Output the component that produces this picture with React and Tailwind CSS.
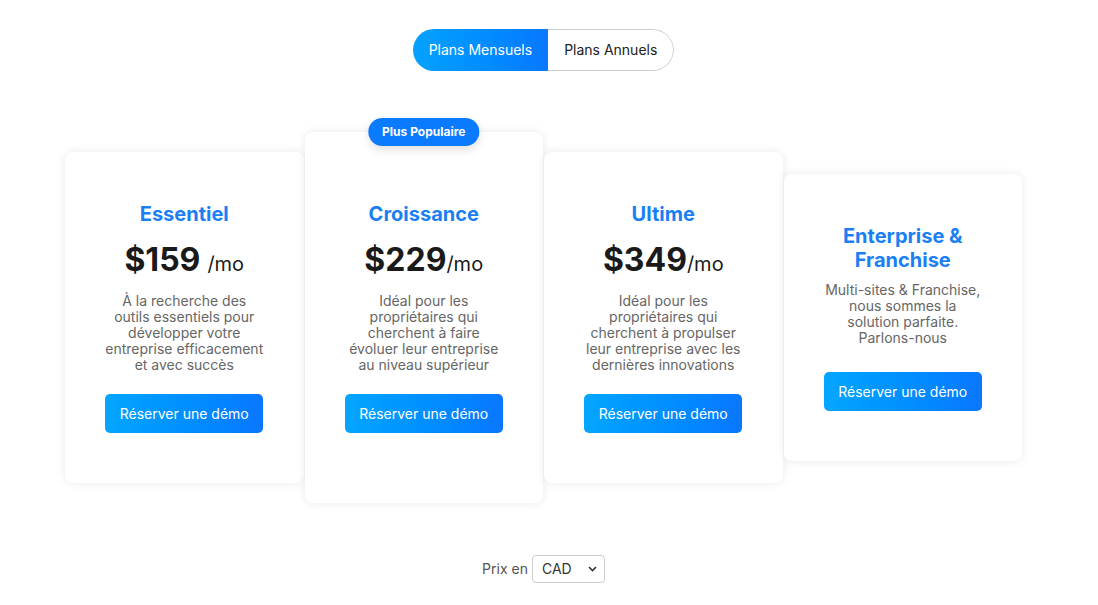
import { useState } from 'react';

const plans = [
  {
    name: 'Essentiel',
    price: '$159',
    spaced: true,
    desc: 'À la recherche des outils essentiels pour développer votre entreprise efficacement et avec succès',
  },
  {
    name: 'Croissance',
    price: '$229',
    popular: true,
    desc: 'Idéal pour les propriétaires qui cherchent à faire évoluer leur entreprise au niveau supérieur',
  },
  {
    name: 'Ultime',
    price: '$349',
    desc: 'Idéal pour les propriétaires qui cherchent à propulser leur entreprise avec les dernières innovations',
  },
  {
    name: 'Enterprise & Franchise',
    desc: 'Multi-sites & Franchise, nous sommes la solution parfaite. Parlons-nous',
  },
];

const DemoButton = ({ className }) => (
  <button
    type="button"
    className={`h-[39px] w-[158px] rounded-[5px] bg-gradient-to-r from-[#05a6ff] to-[#0a77ff] text-sm text-white ${className}`}
  >
    Réserver une démo
  </button>
);

const PlanCard = ({ plan }) => (
  <div
    className={`relative flex flex-col items-center rounded-lg bg-white text-center shadow-[0_0_10px_rgba(0,0,0,0.09)] ${
      plan.popular ? 'py-[70px]' : 'py-[50px]'
    }`}
  >
    {plan.popular && (
      <span className="absolute -top-[14px] left-1/2 flex h-[28px] -translate-x-1/2 items-center rounded-full bg-[#0a7bff] px-[14px] text-xs font-bold text-white shadow-[0_4px_10px_rgba(0,0,0,0.12)]">
        Plus Populaire
      </span>
    )}
    <h3 className="max-w-[170px] text-xl leading-6 font-bold text-[#1a7ff5]">{plan.name}</h3>
    {plan.price && (
      <p className="mt-[14px] flex h-[40px] items-baseline text-[#1a1a1a]">
        <span className="text-[32px] leading-[40px] font-bold">{plan.price}</span>
        <span className={`text-xl ${plan.spaced ? 'ml-[7px]' : ''}`}>/mo</span>
      </p>
    )}
    <p
      className={`w-[160px] text-sm leading-4 text-[#666] ${plan.price ? 'mt-[13px]' : 'mt-[10px]'}`}
    >
      {plan.desc}
    </p>
    <DemoButton className={plan.price ? 'mt-[21px]' : 'mt-[26px]'} />
  </div>
);

export default function App() {
  const [yearly, setYearly] = useState(false);

  return (
    <div className="flex min-h-[605px] w-[1087px] flex-col items-center bg-white pt-[29px] font-['Inter',sans-serif]">
      <div className="flex h-[42px] overflow-hidden rounded-full text-sm">
        <button
          type="button"
          onClick={() => setYearly(false)}
          className={`px-4 ${
            !yearly
              ? 'bg-gradient-to-r from-[#05a2ff] to-[#0a78ff] text-white'
              : 'border border-r-0 border-[#ccc] rounded-l-full text-[#222]'
          }`}
        >
          Plans Mensuels
        </button>
        <button
          type="button"
          onClick={() => setYearly(true)}
          className={`px-4 ${
            yearly
              ? 'bg-gradient-to-r from-[#05a2ff] to-[#0a78ff] text-white'
              : 'rounded-r-full border border-l-0 border-[#ccc] text-[#222]'
          }`}
        >
          Plans Annuels
        </button>
      </div>

      <div className="mt-[61px] grid w-[957px] grid-cols-4 items-center gap-[1px]">
        {plans.map((plan) => (
          <PlanCard key={plan.name} plan={plan} />
        ))}
      </div>

      <div className="mt-[52px] flex items-center gap-[4px] text-sm text-[#555]">
        <span>Prix en</span>
        <div className="relative">
          <select className="h-[28px] w-[73px] appearance-none rounded-[4px] border border-[#ccc] bg-white pl-[9px] text-sm text-[#333]">
            <option>CAD</option>
            <option>USD</option>
          </select>
          <svg
            className="pointer-events-none absolute top-1/2 right-[8px] -translate-y-1/2"
            width="9"
            height="6"
            viewBox="0 0 9 6"
            fill="none"
          >
            <path d="M1 1l3.5 3.5L8 1" stroke="#333" strokeWidth="1.6" />
          </svg>
        </div>
      </div>
    </div>
  );
}
